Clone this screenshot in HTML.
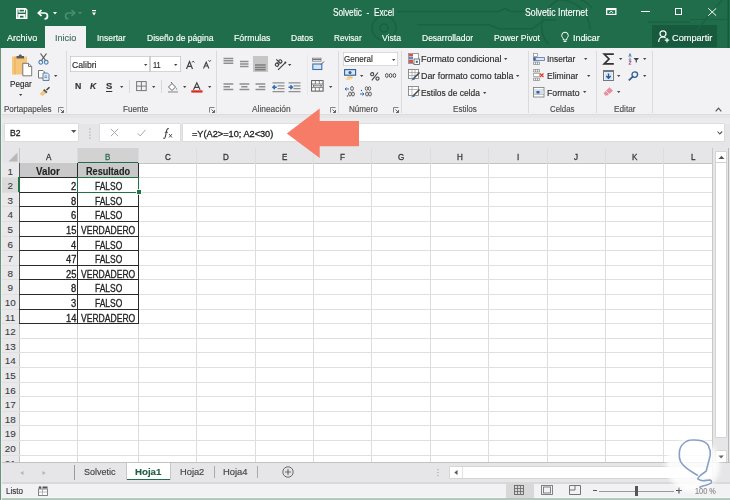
<!DOCTYPE html>
<html><head><meta charset="utf-8">
<style>
html,body{margin:0;padding:0;}
body{width:730px;height:500px;overflow:hidden;position:relative;background:#e6e5e7;font-family:"Liberation Sans",sans-serif;}
.a{position:absolute;}
.t{position:absolute;height:0;line-height:0;white-space:pre;transform-origin:0 0;-webkit-text-stroke:0.15px currentColor;}
.g{-webkit-text-stroke:0.3px currentColor;}
.gb{-webkit-text-stroke:0.1px currentColor;}
svg{position:absolute;overflow:visible;}
</style></head><body>
<!-- title + tabs -->
<div class="a" style="left:0;top:0;width:730px;height:47.5px;background:#1f6d4a"></div>
<div class="a" style="left:45.2px;top:26px;width:41.1px;height:21.5px;background:#f2f1f3"></div>
<div class="a" style="left:652.4px;top:25.2px;width:64.6px;height:22.3px;background:#185a3d"></div>
<!-- ribbon -->
<div class="a" style="left:0;top:47.5px;width:730px;height:67px;background:#f2f1f3"></div>
<div class="a" style="left:0;top:114.2px;width:730px;height:1px;background:#dcdcdc"></div>
<!-- band under ribbon / formula bar -->
<div class="a" style="left:0;top:115.2px;width:730px;height:34px;background:#e6e5e7"></div>
<div class="a" style="left:0;top:118px;width:730px;height:6px;background:#ebeaec"></div>
<div class="a" style="left:5px;top:124.4px;width:73px;height:16.8px;background:#fff;box-shadow:0 0 0 0.6px #d6d6d6"></div>
<div class="a" style="left:100.3px;top:124.4px;width:80.1px;height:16.8px;background:#fff;box-shadow:0 0 0 0.6px #d6d6d6"></div>
<div class="a" style="left:183px;top:124.4px;width:541px;height:16.8px;background:#fff;box-shadow:0 0 0 0.6px #d6d6d6"></div>
<div class="a" style="left:0;top:163px;width:713px;height:300px;background:#fff"></div>
<!-- column header row -->
<div class="a" style="left:1.5px;top:147.5px;width:711px;height:15.7px;background:#e6e5e7"></div>
<div class="a" style="left:77.7px;top:147.5px;width:60.8px;height:15.5px;background:#d2d2d2"></div>
<div class="a" style="left:1.5px;top:162.5px;width:711px;height:1px;background:#c4c4c4"></div>
<div class="a" style="left:77.7px;top:161.5px;width:60.8px;height:1.5px;background:#1f6d4a"></div>
<!-- row header column -->
<div class="a" style="left:1.5px;top:163px;width:18.1px;height:300px;background:#e9e8ea"></div>
<div class="a" style="left:1.5px;top:177.6px;width:18.1px;height:14.6px;background:#dadada"></div>
<div class="a" style="left:19.1px;top:147.5px;width:1px;height:315px;background:#c4c4c4"></div>
<div style="position:absolute;left:77.20px;top:147.5px;width:1px;height:315.4px;background:#dcdcdc"></div>
<div style="position:absolute;left:138.00px;top:147.5px;width:1px;height:315.4px;background:#dcdcdc"></div>
<div style="position:absolute;left:196.37px;top:147.5px;width:1px;height:315.4px;background:#dcdcdc"></div>
<div style="position:absolute;left:254.74px;top:147.5px;width:1px;height:315.4px;background:#dcdcdc"></div>
<div style="position:absolute;left:313.11px;top:147.5px;width:1px;height:315.4px;background:#dcdcdc"></div>
<div style="position:absolute;left:371.48px;top:147.5px;width:1px;height:315.4px;background:#dcdcdc"></div>
<div style="position:absolute;left:429.85px;top:147.5px;width:1px;height:315.4px;background:#dcdcdc"></div>
<div style="position:absolute;left:488.22px;top:147.5px;width:1px;height:315.4px;background:#dcdcdc"></div>
<div style="position:absolute;left:546.59px;top:147.5px;width:1px;height:315.4px;background:#dcdcdc"></div>
<div style="position:absolute;left:604.96px;top:147.5px;width:1px;height:315.4px;background:#dcdcdc"></div>
<div style="position:absolute;left:663.33px;top:147.5px;width:1px;height:315.4px;background:#dcdcdc"></div>
<div style="position:absolute;left:1.8px;top:177.10px;width:710.8px;height:1px;background:#dfdfdf"></div>
<div style="position:absolute;left:1.8px;top:191.70px;width:710.8px;height:1px;background:#dfdfdf"></div>
<div style="position:absolute;left:1.8px;top:206.30px;width:710.8px;height:1px;background:#dfdfdf"></div>
<div style="position:absolute;left:1.8px;top:220.90px;width:710.8px;height:1px;background:#dfdfdf"></div>
<div style="position:absolute;left:1.8px;top:235.50px;width:710.8px;height:1px;background:#dfdfdf"></div>
<div style="position:absolute;left:1.8px;top:250.10px;width:710.8px;height:1px;background:#dfdfdf"></div>
<div style="position:absolute;left:1.8px;top:264.70px;width:710.8px;height:1px;background:#dfdfdf"></div>
<div style="position:absolute;left:1.8px;top:279.30px;width:710.8px;height:1px;background:#dfdfdf"></div>
<div style="position:absolute;left:1.8px;top:293.90px;width:710.8px;height:1px;background:#dfdfdf"></div>
<div style="position:absolute;left:1.8px;top:308.50px;width:710.8px;height:1px;background:#dfdfdf"></div>
<div style="position:absolute;left:1.8px;top:323.10px;width:710.8px;height:1px;background:#dfdfdf"></div>
<div style="position:absolute;left:1.8px;top:337.70px;width:710.8px;height:1px;background:#dfdfdf"></div>
<div style="position:absolute;left:1.8px;top:352.30px;width:710.8px;height:1px;background:#dfdfdf"></div>
<div style="position:absolute;left:1.8px;top:366.90px;width:710.8px;height:1px;background:#dfdfdf"></div>
<div style="position:absolute;left:1.8px;top:381.50px;width:710.8px;height:1px;background:#dfdfdf"></div>
<div style="position:absolute;left:1.8px;top:396.10px;width:710.8px;height:1px;background:#dfdfdf"></div>
<div style="position:absolute;left:1.8px;top:410.70px;width:710.8px;height:1px;background:#dfdfdf"></div>
<div style="position:absolute;left:1.8px;top:425.30px;width:710.8px;height:1px;background:#dfdfdf"></div>
<div style="position:absolute;left:1.8px;top:439.90px;width:710.8px;height:1px;background:#dfdfdf"></div>
<div style="position:absolute;left:1.8px;top:454.50px;width:710.8px;height:1px;background:#dfdfdf"></div>
<div style="position:absolute;left:1.8px;top:469.10px;width:710.8px;height:1px;background:#dfdfdf"></div>
<!-- table -->
<div class="a" style="left:19.6px;top:163px;width:118.9px;height:14.6px;background:#c9c9c9"></div>
<div class="t g" style="left:45.96px;top:156.64px;font-size:9.4px;font-weight:400;color:#333;transform:scaleX(0.8600)">A</div>
<div class="t g" style="left:105.41px;top:156.64px;font-size:9.4px;font-weight:400;color:#2f6b50;transform:scaleX(0.8600)">B</div>
<div class="t g" style="left:164.77px;top:156.64px;font-size:9.4px;font-weight:400;color:#333;transform:scaleX(0.8600)">C</div>
<div class="t g" style="left:223.14px;top:156.64px;font-size:9.4px;font-weight:400;color:#333;transform:scaleX(0.8600)">D</div>
<div class="t g" style="left:281.73px;top:156.64px;font-size:9.4px;font-weight:400;color:#333;transform:scaleX(0.8600)">E</div>
<div class="t g" style="left:340.33px;top:156.64px;font-size:9.4px;font-weight:400;color:#333;transform:scaleX(0.8600)">F</div>
<div class="t g" style="left:398.03px;top:156.64px;font-size:9.4px;font-weight:400;color:#333;transform:scaleX(0.8600)">G</div>
<div class="t g" style="left:456.62px;top:156.64px;font-size:9.4px;font-weight:400;color:#333;transform:scaleX(0.8600)">H</div>
<div class="t g" style="left:516.78px;top:156.64px;font-size:9.4px;font-weight:400;color:#333;transform:scaleX(0.8600)">I</div>
<div class="t g" style="left:574.26px;top:156.64px;font-size:9.4px;font-weight:400;color:#333;transform:scaleX(0.8600)">J</div>
<div class="t g" style="left:631.95px;top:156.64px;font-size:9.4px;font-weight:400;color:#333;transform:scaleX(0.8600)">K</div>
<div class="t g" style="left:690.76px;top:156.64px;font-size:9.4px;font-weight:400;color:#333;transform:scaleX(0.8600)">L</div>
<div class="t gb" style="left:7.45px;top:171.67px;font-size:9.9px;font-weight:400;color:#3c3c3c;transform:scaleX(1.0000)">1</div>
<div class="t gb" style="left:7.45px;top:186.27px;font-size:9.9px;font-weight:400;color:#3c3c3c;transform:scaleX(1.0000)">2</div>
<div class="t gb" style="left:7.45px;top:200.87px;font-size:9.9px;font-weight:400;color:#3c3c3c;transform:scaleX(1.0000)">3</div>
<div class="t gb" style="left:7.45px;top:215.47px;font-size:9.9px;font-weight:400;color:#3c3c3c;transform:scaleX(1.0000)">4</div>
<div class="t gb" style="left:7.45px;top:230.07px;font-size:9.9px;font-weight:400;color:#3c3c3c;transform:scaleX(1.0000)">5</div>
<div class="t gb" style="left:7.45px;top:244.67px;font-size:9.9px;font-weight:400;color:#3c3c3c;transform:scaleX(1.0000)">6</div>
<div class="t gb" style="left:7.45px;top:259.27px;font-size:9.9px;font-weight:400;color:#3c3c3c;transform:scaleX(1.0000)">7</div>
<div class="t gb" style="left:7.45px;top:273.87px;font-size:9.9px;font-weight:400;color:#3c3c3c;transform:scaleX(1.0000)">8</div>
<div class="t gb" style="left:7.45px;top:288.47px;font-size:9.9px;font-weight:400;color:#3c3c3c;transform:scaleX(1.0000)">9</div>
<div class="t gb" style="left:4.71px;top:303.07px;font-size:9.9px;font-weight:400;color:#3c3c3c;transform:scaleX(1.0000)">10</div>
<div class="t gb" style="left:5.07px;top:317.67px;font-size:9.9px;font-weight:400;color:#3c3c3c;transform:scaleX(1.0000)">11</div>
<div class="t gb" style="left:4.71px;top:332.27px;font-size:9.9px;font-weight:400;color:#3c3c3c;transform:scaleX(1.0000)">12</div>
<div class="t gb" style="left:4.71px;top:346.87px;font-size:9.9px;font-weight:400;color:#3c3c3c;transform:scaleX(1.0000)">13</div>
<div class="t gb" style="left:4.71px;top:361.47px;font-size:9.9px;font-weight:400;color:#3c3c3c;transform:scaleX(1.0000)">14</div>
<div class="t gb" style="left:4.71px;top:376.07px;font-size:9.9px;font-weight:400;color:#3c3c3c;transform:scaleX(1.0000)">15</div>
<div class="t gb" style="left:4.71px;top:390.67px;font-size:9.9px;font-weight:400;color:#3c3c3c;transform:scaleX(1.0000)">16</div>
<div class="t gb" style="left:4.71px;top:405.27px;font-size:9.9px;font-weight:400;color:#3c3c3c;transform:scaleX(1.0000)">17</div>
<div class="t gb" style="left:4.71px;top:419.87px;font-size:9.9px;font-weight:400;color:#3c3c3c;transform:scaleX(1.0000)">18</div>
<div class="t gb" style="left:4.71px;top:434.47px;font-size:9.9px;font-weight:400;color:#3c3c3c;transform:scaleX(1.0000)">19</div>
<div class="t gb" style="left:4.71px;top:449.07px;font-size:9.9px;font-weight:400;color:#3c3c3c;transform:scaleX(1.0000)">20</div>
<div class="t gb" style="left:4.71px;top:463.67px;font-size:9.9px;font-weight:400;color:#3c3c3c;transform:scaleX(1.0000)">21</div>
<div class="t g" style="left:71.07px;top:187.13px;font-size:10px;font-weight:400;color:#222;transform:scaleX(0.9400)">2</div>
<div class="t g" style="left:94.65px;top:187.13px;font-size:10px;font-weight:400;color:#222;transform:scaleX(0.8465)">FALSO</div>
<div class="t g" style="left:71.07px;top:201.73px;font-size:10px;font-weight:400;color:#222;transform:scaleX(0.9400)">8</div>
<div class="t g" style="left:94.65px;top:201.73px;font-size:10px;font-weight:400;color:#222;transform:scaleX(0.8465)">FALSO</div>
<div class="t g" style="left:71.07px;top:216.34px;font-size:10px;font-weight:400;color:#222;transform:scaleX(0.9400)">6</div>
<div class="t g" style="left:94.65px;top:216.34px;font-size:10px;font-weight:400;color:#222;transform:scaleX(0.8465)">FALSO</div>
<div class="t g" style="left:65.84px;top:230.94px;font-size:10px;font-weight:400;color:#222;transform:scaleX(0.9400)">15</div>
<div class="t g" style="left:81.15px;top:230.94px;font-size:10px;font-weight:400;color:#222;transform:scaleX(0.8570)">VERDADERO</div>
<div class="t g" style="left:71.07px;top:245.53px;font-size:10px;font-weight:400;color:#222;transform:scaleX(0.9400)">4</div>
<div class="t g" style="left:94.65px;top:245.53px;font-size:10px;font-weight:400;color:#222;transform:scaleX(0.8465)">FALSO</div>
<div class="t g" style="left:65.84px;top:260.14px;font-size:10px;font-weight:400;color:#222;transform:scaleX(0.9400)">47</div>
<div class="t g" style="left:94.65px;top:260.14px;font-size:10px;font-weight:400;color:#222;transform:scaleX(0.8465)">FALSO</div>
<div class="t g" style="left:65.84px;top:274.74px;font-size:10px;font-weight:400;color:#222;transform:scaleX(0.9400)">25</div>
<div class="t g" style="left:81.15px;top:274.74px;font-size:10px;font-weight:400;color:#222;transform:scaleX(0.8570)">VERDADERO</div>
<div class="t g" style="left:71.07px;top:289.34px;font-size:10px;font-weight:400;color:#222;transform:scaleX(0.9400)">8</div>
<div class="t g" style="left:94.65px;top:289.34px;font-size:10px;font-weight:400;color:#222;transform:scaleX(0.8465)">FALSO</div>
<div class="t g" style="left:71.07px;top:303.94px;font-size:10px;font-weight:400;color:#222;transform:scaleX(0.9400)">3</div>
<div class="t g" style="left:94.65px;top:303.94px;font-size:10px;font-weight:400;color:#222;transform:scaleX(0.8465)">FALSO</div>
<div class="t g" style="left:65.84px;top:318.54px;font-size:10px;font-weight:400;color:#222;transform:scaleX(0.9400)">14</div>
<div class="t g" style="left:81.15px;top:318.54px;font-size:10px;font-weight:400;color:#222;transform:scaleX(0.8570)">VERDADERO</div>
<div class="t gb" style="left:36.45px;top:172.13px;font-size:10px;font-weight:700;color:#222;transform:scaleX(0.9768)">Valor</div>
<div class="t gb" style="left:85.80px;top:172.13px;font-size:10px;font-weight:700;color:#222;transform:scaleX(0.9101)">Resultado</div>
<!-- scrollbar v -->
<div class="a" style="left:712.4px;top:147.5px;width:17.6px;height:315.4px;background:#e6e5e7"></div>
<div class="a" style="left:712.4px;top:147.5px;width:1px;height:315.4px;background:#c8c8c8"></div>
<div class="a" style="left:716px;top:151.6px;width:10px;height:285px;background:#fff;box-shadow:0 0 0 0.6px #c8c8c8"></div>
<div class="a" style="left:716px;top:162.3px;width:10px;height:0.8px;background:#d0d0d0"></div>
<div class="a" style="left:727.5px;top:147.5px;width:1.2px;height:315.4px;background:#b8b8b8"></div>
<!-- sheet tab bar -->
<div class="a" style="left:0;top:462.9px;width:730px;height:19px;background:#e6e5e7"></div>
<div class="a" style="left:0;top:462.2px;width:730px;height:1.3px;background:#c2c2c2"></div>
<div class="a" style="left:126px;top:462.9px;width:45px;height:17px;background:#fff"></div>
<div class="a" style="left:126px;top:478.8px;width:45px;height:1.6px;background:#1f6d4a"></div>
<div class="a" style="left:462px;top:466.5px;width:250px;height:11.5px;background:#fff;box-shadow:0 0 0 0.6px #c8c8c8"></div>
<!-- status bar -->
<div class="a" style="left:0;top:481.9px;width:730px;height:18.1px;background:#f2f1f3"></div>
<div class="a" style="left:0;top:482.3px;width:730px;height:1.5px;background:#d9d9d9"></div>
<div class="a" style="left:0;top:497px;width:730px;height:1.4px;background:#f4faf6"></div>
<div class="a" style="left:0;top:498.4px;width:730px;height:1.6px;background:#b3c7bb"></div>
<div class="a" style="left:505.5px;top:483.5px;width:28px;height:14px;background:#d8d8d8"></div>
<!-- window borders -->
<div class="a" style="left:0;top:47.5px;width:1px;height:452.5px;background:#6f8f7f"></div>
<div class="a" style="left:1px;top:47.5px;width:0.8px;height:452.5px;background:#e8f2ee"></div>
<!-- title bar circuit pattern -->
<svg style="left:0;top:0" width="730" height="47" viewBox="0 0 730 47">
 <g fill="none" stroke="#1a6243" stroke-width="1.6">
  <path d="M397 11.5 H499 L505 8.5 L511 11.5 H540"/>
  <path d="M417 24.7 H489 L499 28.8 H532 L545 20 H556"/>
  <path d="M697 30 L722 0"/>
  <path d="M648 22 H690"/>
  <path d="M548 44 A24 24 0 0 1 592 8"/>
  <path d="M560 0 A30 30 0 0 1 590 30"/>
 </g>
 <circle cx="384" cy="28" r="12" fill="none" stroke="#1a6243" stroke-width="1.6"/>
 <circle cx="384" cy="28" r="4" fill="none" stroke="#1a6243" stroke-width="1.6"/>
 <rect x="727.5" y="0" width="1.5" height="47.5" fill="#185a3d"/>
 <path d="M690 19.5 H727" stroke="#1a6243" stroke-width="1.2"/>
</svg>
<!-- quick access -->
<svg style="left:16px;top:7.5px" width="12" height="11" viewBox="0 0 12 11">
 <path d="M0.8 0.8 H9.5 L10.7 2 V10.2 H0.8 Z" fill="none" stroke="#fff" stroke-width="1.6"/>
 <rect x="3" y="1" width="5.5" height="3" fill="none" stroke="#fff" stroke-width="1.2"/>
 <rect x="2.2" y="6" width="7.3" height="4.5" fill="#fff"/>
 <rect x="4" y="7.8" width="3.5" height="1.8" fill="#1f6d4a"/>
</svg>
<svg style="left:37px;top:8.5px" width="12" height="10" viewBox="0 0 12 10">
 <path d="M1.5 4 H7.5 A3 3 0 0 1 7.5 10" fill="none" stroke="#fff" stroke-width="1.7"/>
 <path d="M4.5 1 L1.3 4 L4.5 7" fill="none" stroke="#fff" stroke-width="1.7"/>
</svg>
<svg style="left:52.5px;top:11.8px" width="4" height="3" viewBox="0 0 4 3"><path d="M0 0H4L2 2.5Z" fill="#fff"/></svg>
<svg style="left:63.5px;top:8.5px" width="12" height="10" viewBox="0 0 12 10" opacity="0.35">
 <path d="M10.5 4 H4.5 A3 3 0 0 0 4.5 10" fill="none" stroke="#9fc9b0" stroke-width="1.7"/>
 <path d="M7.5 1 L10.7 4 L7.5 7" fill="none" stroke="#9fc9b0" stroke-width="1.7"/>
</svg>
<svg style="left:78.4px;top:11.8px" width="4" height="3" viewBox="0 0 4 3" opacity="0.35"><path d="M0 0H4L2 2.5Z" fill="#9fc9b0"/></svg>
<svg style="left:92px;top:10px" width="4" height="6" viewBox="0 0 4 6"><rect x="0" y="0" width="4" height="1.2" fill="#fff"/><path d="M0 2.5H4L2 5.5Z" fill="#fff"/></svg>
<!-- window controls -->
<svg style="left:605.5px;top:8.2px" width="11" height="7" viewBox="0 0 11 7">
 <rect x="0" y="0" width="10.5" height="7" fill="#fff"/>
 <rect x="1.3" y="2.2" width="7.9" height="3.6" fill="#1f6d4a"/>
 <path d="M3.3 5 L5.25 3 L7.2 5" fill="none" stroke="#fff" stroke-width="1"/>
</svg>
<div class="a" style="left:640.5px;top:11.3px;width:9px;height:1px;background:#fff"></div>
<div class="a" style="left:675.4px;top:8.2px;width:7px;height:7px;box-sizing:border-box;border:1px solid #fff"></div>
<svg style="left:708px;top:8px" width="8.5" height="8" viewBox="0 0 8.5 8"><path d="M0.3 0.3 L8.2 7.7 M8.2 0.3 L0.3 7.7" stroke="#fff" stroke-width="1"/></svg>
<!-- tell me bulb -->
<svg style="left:560.5px;top:32px" width="8" height="11" viewBox="0 0 8 11">
 <path d="M2.5 8 C2.5 6 0.7 5.2 0.7 3.5 A3.3 3.3 0 0 1 7.3 3.5 C7.3 5.2 5.5 6 5.5 8 Z" fill="none" stroke="#fff" stroke-width="1"/>
 <path d="M2.6 9.5 H5.4" stroke="#fff" stroke-width="1"/>
</svg>
<!-- share person -->
<svg style="left:658px;top:30px" width="12" height="13" viewBox="0 0 12 13">
 <circle cx="5" cy="3.8" r="3" fill="none" stroke="#fff" stroke-width="1.2"/>
 <path d="M0.7 12 C0.7 8.8 2.5 7 5 7 C6.2 7 7 7.4 7.6 8" fill="none" stroke="#fff" stroke-width="1.2"/>
 <path d="M9 8 V12.5 M6.8 10.2 H11.2" stroke="#fff" stroke-width="1.2"/>
</svg>

<!-- ribbon group separators -->
<div class="a" style="left:65.5px;top:51px;width:1px;height:62px;background:#dadada"></div>
<div class="a" style="left:216px;top:51px;width:1px;height:62px;background:#dadada"></div>
<div class="a" style="left:338px;top:51px;width:1px;height:62px;background:#dadada"></div>
<div class="a" style="left:401.3px;top:51px;width:1px;height:62px;background:#dadada"></div>
<div class="a" style="left:527.7px;top:51px;width:1px;height:62px;background:#dadada"></div>
<div class="a" style="left:595.5px;top:51px;width:1px;height:62px;background:#dadada"></div>
<div class="a" style="left:652px;top:51px;width:1px;height:62px;background:#dadada"></div>
<!-- inner separators -->
<div class="a" style="left:128.8px;top:80px;width:1px;height:13px;background:#d8d8d8"></div>
<div class="a" style="left:161.2px;top:80px;width:1px;height:13px;background:#d8d8d8"></div>
<div class="a" style="left:306.5px;top:55px;width:1px;height:40px;background:#e8e8e8"></div>

<!-- Portapapeles -->
<svg style="left:12px;top:53.5px" width="22" height="23" viewBox="0 0 22 23">
 <rect x="0" y="2.5" width="15" height="18" fill="#f5c67a"/>
 <rect x="2" y="2.5" width="2" height="18" fill="#eab25a" opacity="0.6"/>
 <path d="M4.5 4.5 V2 H6.5 L7.5 0.5 H9 L10 2 H12 V4.5 Z" fill="#5a5a5a"/>
 <path d="M10.8 9.3 H16.5 L19.7 12.5 V21.8 H10.8 Z" fill="#fff" stroke="#6b6b6b" stroke-width="0.9"/>
 <path d="M16.5 9.3 V12.5 H19.7" fill="none" stroke="#6b6b6b" stroke-width="0.9"/>
</svg>
<svg style="left:18.5px;top:93.8px" width="4" height="3" viewBox="0 0 4 3"><path d="M0 0H3.4L1.7 2Z" fill="#444"/></svg>
<svg style="left:38px;top:52.5px" width="11" height="12" viewBox="0 0 11 12">
 <path d="M2.5 0.5 L8 8 M8.5 0.5 L3 8" stroke="#555" stroke-width="1.2"/>
 <circle cx="2.8" cy="9.3" r="1.9" fill="none" stroke="#4a7fb5" stroke-width="1.1"/>
 <circle cx="8.2" cy="9.3" r="1.9" fill="none" stroke="#4a7fb5" stroke-width="1.1"/>
</svg>
<svg style="left:38px;top:69.5px" width="12" height="11" viewBox="0 0 12 11">
 <path d="M0.5 0.5 H5 L6.5 2 V8 H0.5 Z" fill="#fff" stroke="#666" stroke-width="0.9"/>
 <path d="M5 3 H9.5 L11 4.5 V10.5 H5 Z" fill="#dfe9f5" stroke="#4d78a8" stroke-width="0.9"/>
 <path d="M6.5 6 H9 M6.5 7.5 H9" stroke="#4d78a8" stroke-width="0.7"/>
</svg>
<svg style="left:53.5px;top:74.5px" width="4" height="3" viewBox="0 0 4 3"><path d="M0 0H3.4L1.7 2Z" fill="#444"/></svg>
<svg style="left:39px;top:86.5px" width="11" height="9" viewBox="0 0 11 9">
 <path d="M0.5 7 L4.5 3 L7.5 6 L3.5 9 Z" fill="#f0c77f"/>
 <path d="M4 3.2 L7.3 6.2 L8.5 5 L5.3 2 Z" fill="#555"/>
 <path d="M7.5 3 L10.5 0.2" stroke="#444" stroke-width="1.5"/>
</svg>
<!-- launchers -->
<svg style="left:57.5px;top:107px" width="6" height="6" viewBox="0 0 6 6"><path d="M0.5 5.5 V0.5 H5.5" fill="none" stroke="#777" stroke-width="0.9"/><path d="M2.5 2.5 L5.5 5.5 M3 5.5 H5.5 V3" fill="none" stroke="#555" stroke-width="0.9"/></svg>
<svg style="left:208.6px;top:107px" width="6" height="6" viewBox="0 0 6 6"><path d="M0.5 5.5 V0.5 H5.5" fill="none" stroke="#777" stroke-width="0.9"/><path d="M2.5 2.5 L5.5 5.5 M3 5.5 H5.5 V3" fill="none" stroke="#555" stroke-width="0.9"/></svg>
<svg style="left:329.8px;top:107px" width="6" height="6" viewBox="0 0 6 6"><path d="M0.5 5.5 V0.5 H5.5" fill="none" stroke="#777" stroke-width="0.9"/><path d="M2.5 2.5 L5.5 5.5 M3 5.5 H5.5 V3" fill="none" stroke="#555" stroke-width="0.9"/></svg>
<svg style="left:393.2px;top:107px" width="6" height="6" viewBox="0 0 6 6"><path d="M0.5 5.5 V0.5 H5.5" fill="none" stroke="#777" stroke-width="0.9"/><path d="M2.5 2.5 L5.5 5.5 M3 5.5 H5.5 V3" fill="none" stroke="#555" stroke-width="0.9"/></svg>
<!-- collapse caret -->
<svg style="left:715px;top:106.5px" width="7" height="5" viewBox="0 0 7 5"><path d="M0.7 4.3 L3.5 1.2 L6.3 4.3" fill="none" stroke="#555" stroke-width="1.2"/></svg>

<!-- Fuente -->
<div class="a" style="left:69.6px;top:56.2px;width:80.7px;height:16px;background:#fff;box-shadow:inset 0 0 0 0.8px #c6c6c6"></div>
<div class="a" style="left:150.3px;top:56.2px;width:30.9px;height:16px;background:#fff;box-shadow:inset 0 0 0 0.8px #c6c6c6"></div>
<svg style="left:143.6px;top:63.6px" width="4" height="3" viewBox="0 0 4 3"><path d="M0 0H3.4L1.7 2Z" fill="#444"/></svg>
<svg style="left:174.4px;top:63.6px" width="4" height="3" viewBox="0 0 4 3"><path d="M0 0H3.4L1.7 2Z" fill="#444"/></svg>
<svg style="left:186px;top:59.5px" width="9" height="10" viewBox="0 0 9 10">
 <path d="M0.5 9 L3.5 1.5 L6.5 9 M1.7 6.3 H5.3" fill="none" stroke="#444" stroke-width="1.2"/>
 <path d="M6 2.5 L7.2 1 L8.4 2.5" fill="none" stroke="#444" stroke-width="0.9"/>
</svg>
<svg style="left:202.5px;top:59px" width="9" height="10" viewBox="0 0 9 10">
 <path d="M0.5 9.5 L3.2 3.2 L5.9 9.5 M1.6 7 H4.8" fill="none" stroke="#444" stroke-width="1.1"/>
 <path d="M5.5 1.2 L6.7 2.6 L7.9 1.2" fill="none" stroke="#444" stroke-width="0.9"/>
</svg>

<svg style="left:120px;top:86.4px" width="4" height="3" viewBox="0 0 4 3"><path d="M0 0H3.4L1.7 2Z" fill="#444"/></svg>
<svg style="left:135.5px;top:81.4px" width="11" height="10" viewBox="0 0 11 10">
 <rect x="0.6" y="0.6" width="9.6" height="9" fill="none" stroke="#777" stroke-width="1"/>
 <path d="M5.4 0.6 V9.6 M0.6 5.1 H10.2" stroke="#777" stroke-width="1"/>
</svg>
<svg style="left:151.6px;top:86.4px" width="4" height="3" viewBox="0 0 4 3"><path d="M0 0H3.4L1.7 2Z" fill="#444"/></svg>
<svg style="left:167px;top:80.8px" width="12" height="12" viewBox="0 0 12 12">
 <path d="M1.5 6 L5 2.5 L8.5 6 L5 9.5 Z" fill="#fff" stroke="#666" stroke-width="1"/>
 <path d="M4 1 L5 2.5" stroke="#666" stroke-width="1"/>
 <path d="M9.5 6.5 Q10.8 8 9.8 9 Q8.8 8 9.5 6.5Z" fill="#3a8a9a"/>
 <rect x="1" y="10.2" width="10" height="1.5" fill="#a8a8a8"/>
</svg>
<svg style="left:183px;top:86.4px" width="4" height="3" viewBox="0 0 4 3"><path d="M0 0H3.4L1.7 2Z" fill="#444"/></svg>
<svg style="left:191px;top:81.5px" width="12" height="11" viewBox="0 0 12 11">
 <path d="M2.5 7.8 L5.8 0.8 L9.1 7.8 M3.8 5.3 H7.8" fill="none" stroke="#444" stroke-width="1.2"/>
 <rect x="0.3" y="8.3" width="11.2" height="2.3" fill="#e02b20"/>
</svg>
<svg style="left:207.7px;top:86.4px" width="4" height="3" viewBox="0 0 4 3"><path d="M0 0H3.4L1.7 2Z" fill="#444"/></svg>

<!-- Alineación -->
<div class="a" style="left:252.8px;top:55.8px;width:15.3px;height:16.4px;background:#c6c6c6"></div>
<svg style="left:223px;top:57px" width="48" height="14" viewBox="0 0 48 14">
 <g stroke="#8f8f8f" stroke-width="1.5">
 <path d="M0.5 1.4 H10.3 M0.5 3.8 H10.3 M0.5 6.2 H10.3"/>
 <path d="M17 4.6 H25.5 M17 7 H25.5 M17 9.4 H25.5"/>
 </g>
 <g stroke="#7d7d7d" stroke-width="1.5">
 <path d="M32 8 H42.7 M32 10.4 H42.7 M32 12.8 H42.7"/>
 </g>
</svg>
<svg style="left:272.5px;top:58px" width="14" height="12" viewBox="0 0 14 12">
 <g transform="translate(5.2,4.6) rotate(-45)" fill="none" stroke="#3c3c3c" stroke-width="1.1">
  <ellipse cx="-2.4" cy="0.6" rx="1.5" ry="1.7"/><path d="M-0.9 -1.2 V2.4"/>
  <ellipse cx="2.4" cy="0.6" rx="1.5" ry="1.7"/><path d="M0.9 -3.6 V2.4"/>
 </g>
 <path d="M5 11.8 L12.2 4.8" stroke="#3c3c3c" stroke-width="1.1"/>
 <circle cx="12.4" cy="4.6" r="1" fill="#3c3c3c"/>
</svg>
<svg style="left:288.4px;top:63.8px" width="4" height="3" viewBox="0 0 4 3"><path d="M0 0H3.4L1.7 2Z" fill="#444"/></svg>
<svg style="left:223px;top:82.5px" width="44" height="9" viewBox="0 0 44 9">
 <g stroke="#8f8f8f" stroke-width="1.5">
 <path d="M0.5 1 H10.3 M0.5 3.8 H7 M0.5 6.6 H10.3"/>
 <path d="M16.5 1 H26.3 M18.3 3.8 H24.5 M16.5 6.6 H26.3"/>
 <path d="M32.5 1 H42.3 M35.8 3.8 H42.3 M32.5 6.6 H42.3"/>
 </g>
</svg>
<svg style="left:272.2px;top:81.5px" width="30" height="11" viewBox="0 0 30 11">
 <g stroke="#8f8f8f" stroke-width="1.2">
 <path d="M0.5 0.8 H12.5 M5.5 3.8 H12.5 M5.5 6.6 H12.5 M0.5 9.6 H12.5"/>
 <path d="M16.5 0.8 H28.5 M21.5 3.8 H28.5 M21.5 6.6 H28.5 M16.5 9.6 H28.5"/>
 </g>
 <path d="M1 5.2 H4.8 M2.9 3.2 L0.9 5.2 L2.9 7.2" fill="none" stroke="#2f6fb3" stroke-width="1.5"/>
 <path d="M16.5 5.2 H20.3 M18.4 3.2 L20.4 5.2 L18.4 7.2" fill="none" stroke="#2f6fb3" stroke-width="1.5"/>
</svg>
<svg style="left:311.5px;top:57.5px" width="13" height="13" viewBox="0 0 13 13">
 <path d="M0.5 1.5 H9" stroke="#777" stroke-width="1"/>
 <rect x="0.5" y="0.2" width="8.5" height="3" fill="none" stroke="#888" stroke-width="0.9"/>
 <rect x="0.8" y="6" width="9" height="5.5" fill="#d6e4f3" stroke="#3b73b0" stroke-width="1.1"/>
 <path d="M9 6.5 L12 3.5" stroke="#555" stroke-width="1"/>
</svg>
<svg style="left:310.9px;top:80.4px" width="13" height="12" viewBox="0 0 13 12">
 <rect x="0.6" y="0.6" width="11.5" height="10.5" fill="#fff" stroke="#555" stroke-width="1"/>
 <path d="M0.6 4 H12.1 M0.6 7.6 H12.1 M4.4 0.6 V4 M8.3 0.6 V4 M4.4 7.6 V11.1 M8.3 7.6 V11.1" stroke="#666" stroke-width="0.8"/>
 <path d="M2 5.8 H10.7 M3.3 4.7 L2 5.8 L3.3 6.9 M9.4 4.7 L10.7 5.8 L9.4 6.9" fill="none" stroke="#555" stroke-width="0.8"/>
</svg>
<svg style="left:329px;top:86.4px" width="4" height="3" viewBox="0 0 4 3"><path d="M0 0H3.4L1.7 2Z" fill="#444"/></svg>

<!-- Número -->
<div class="a" style="left:342.6px;top:52px;width:55.8px;height:14px;background:#fff;box-shadow:inset 0 0 0 0.8px #d0d0d0"></div>
<svg style="left:391.6px;top:59.3px" width="4" height="3" viewBox="0 0 4 3"><path d="M0 0H3.4L1.7 2Z" fill="#444"/></svg>
<svg style="left:344.2px;top:69px" width="13" height="11" viewBox="0 0 13 11">
 <rect x="0.6" y="0.6" width="11" height="5.6" fill="#dbe7f4" stroke="#2d5f99" stroke-width="1.1"/>
 <circle cx="6" cy="3.4" r="1.5" fill="#2d5f99"/>
 <ellipse cx="6" cy="8.5" rx="3" ry="1.3" fill="#f3c67b"/>
 <ellipse cx="4" cy="10" rx="2.5" ry="1" fill="#f6d49a"/>
</svg>
<svg style="left:360.2px;top:74.8px" width="4" height="3" viewBox="0 0 4 3"><path d="M0 0H3.4L1.7 2Z" fill="#444"/></svg>
<svg style="left:370px;top:71.5px" width="10" height="9" viewBox="0 0 10 9">
 <circle cx="2.2" cy="2.2" r="1.6" fill="none" stroke="#444" stroke-width="1.1"/>
 <circle cx="7.5" cy="6.6" r="1.6" fill="none" stroke="#444" stroke-width="1.1"/>
 <path d="M8 0.5 L1.8 8.3" stroke="#444" stroke-width="1.1"/>
</svg>
<svg style="left:384.8px;top:72.8px" width="12" height="5" viewBox="0 0 12 5">
 <g fill="none" stroke="#444" stroke-width="0.9"><ellipse cx="1.8" cy="2.5" rx="1.3" ry="2"/><ellipse cx="5.6" cy="2.5" rx="1.3" ry="2"/><ellipse cx="9.4" cy="2.5" rx="1.3" ry="2"/></g>
</svg>
<svg style="left:344.2px;top:86.4px" width="28" height="11" viewBox="0 0 28 11">
 <g fill="none" stroke="#555" stroke-width="0.9">
  <ellipse cx="8" cy="2.5" rx="1.4" ry="2"/><ellipse cx="6" cy="8" rx="1.4" ry="2"/><ellipse cx="9" cy="8" rx="1.4" ry="2"/>
  <ellipse cx="22.5" cy="2.5" rx="1.2" ry="1.8"/><ellipse cx="25.5" cy="2.5" rx="1.2" ry="1.8"/><ellipse cx="23" cy="8" rx="1.4" ry="2"/><ellipse cx="26" cy="8" rx="1.4" ry="2"/>
 </g>
 <path d="M1 3 H5 M2.5 1.5 L1 3 L2.5 4.5" fill="none" stroke="#2f6fb3" stroke-width="1"/>
 <path d="M16 8 H20 M18.5 6.5 L20 8 L18.5 9.5" fill="none" stroke="#2f6fb3" stroke-width="1"/>
 <circle cx="3.5" cy="10" r="0.7" fill="#555"/><circle cx="17.5" cy="4.5" r="0.7" fill="#555"/>
</svg>

<!-- Estilos icons -->
<svg style="left:407.7px;top:52.5px" width="12" height="12" viewBox="0 0 12 12">
 <rect x="0.5" y="0.5" width="10" height="10" fill="#fff" stroke="#888" stroke-width="0.8"/>
 <rect x="1" y="1" width="4" height="2.5" fill="#d9544a"/><rect x="1" y="4" width="4" height="2.5" fill="#5a8ac6"/><rect x="1" y="7" width="4" height="3" fill="#d9544a"/>
 <rect x="6" y="6" width="5.5" height="5.5" fill="#fff" stroke="#555" stroke-width="0.8"/>
 <rect x="7.8" y="7.8" width="2" height="2" fill="#2f5f9f"/>
</svg>
<svg style="left:407.7px;top:69px" width="12" height="12" viewBox="0 0 12 12">
 <rect x="0.5" y="0.5" width="10" height="9" fill="#fff" stroke="#777" stroke-width="0.8"/>
 <path d="M0.5 3.5 H10.5 M0.5 6.5 H10.5 M4 0.5 V9.5 M7 0.5 V9.5" stroke="#999" stroke-width="0.7"/>
 <path d="M5 10 L11.5 3.5" stroke="#444" stroke-width="1.5"/>
 <path d="M3 11.5 L5.5 9 L7 10.5 Z" fill="#2f73c0"/>
</svg>
<svg style="left:407.7px;top:85.8px" width="12" height="12" viewBox="0 0 12 12">
 <rect x="0.5" y="0.5" width="10" height="9" fill="#fff" stroke="#777" stroke-width="0.8"/>
 <path d="M0.5 3.5 H10.5 M4 0.5 V9.5" stroke="#999" stroke-width="0.7"/>
 <path d="M5 10 L11.5 3.5" stroke="#444" stroke-width="1.5"/>
 <path d="M3 11.5 L5.5 9 L7 10.5 Z" fill="#2f73c0"/>
</svg>
<svg style="left:504px;top:58px" width="4" height="3" viewBox="0 0 4 3"><path d="M0 0H3.4L1.7 2Z" fill="#444"/></svg>
<svg style="left:516px;top:74.6px" width="4" height="3" viewBox="0 0 4 3"><path d="M0 0H3.4L1.7 2Z" fill="#444"/></svg>
<svg style="left:482.5px;top:91.6px" width="4" height="3" viewBox="0 0 4 3"><path d="M0 0H3.4L1.7 2Z" fill="#444"/></svg>

<!-- Celdas icons -->
<svg style="left:533px;top:52.5px" width="12" height="12" viewBox="0 0 12 12">
 <rect x="0.5" y="0.5" width="4" height="3" fill="#fff" stroke="#888" stroke-width="0.7"/>
 <path d="M0.5 4.5 H11.5 V7.5 H0.5 Z" fill="#dce7f3" stroke="#4d78a8" stroke-width="0.8"/>
 <path d="M0.8 4 L3.5 6 L0.8 8 Z" fill="#2f5f9f"/>
 <path d="M0.5 9 H6.5 V11.5 H0.5 Z M2.5 9 V11.5 M4.5 9 V11.5" fill="none" stroke="#888" stroke-width="0.7"/>
</svg>
<svg style="left:533px;top:68.5px" width="12" height="12" viewBox="0 0 12 12">
 <path d="M0.5 0.5 H6.5 V3 H0.5 Z M2.5 0.5 V3 M4.5 0.5 V3" fill="none" stroke="#888" stroke-width="0.7"/>
 <rect x="0.5" y="4.5" width="6" height="3" fill="#fff" stroke="#999" stroke-width="0.7"/>
 <path d="M7 4.5 L10.5 8 M10.5 4.5 L7 8" stroke="#d83b2b" stroke-width="1.1"/>
 <path d="M0.5 9 H6.5 V11.5 H0.5 Z M2.5 9 V11.5 M4.5 9 V11.5" fill="none" stroke="#888" stroke-width="0.7"/>
</svg>
<svg style="left:533px;top:85.5px" width="12" height="12" viewBox="0 0 12 12">
 <rect x="0.5" y="1.5" width="10.5" height="9.5" fill="#fff" stroke="#777" stroke-width="0.8"/>
 <path d="M0.5 4 H11 M0.5 8.5 H11" stroke="#999" stroke-width="0.6"/>
 <rect x="1" y="4.5" width="9.5" height="3.5" fill="#cfdff0"/>
 <rect x="3.5" y="5" width="3" height="2.5" fill="#2f5f9f"/>
</svg>
<svg style="left:583.5px;top:58px" width="4" height="3" viewBox="0 0 4 3"><path d="M0 0H3.4L1.7 2Z" fill="#444"/></svg>
<svg style="left:587px;top:74.6px" width="4" height="3" viewBox="0 0 4 3"><path d="M0 0H3.4L1.7 2Z" fill="#444"/></svg>
<svg style="left:583px;top:91.2px" width="4" height="3" viewBox="0 0 4 3"><path d="M0 0H3.4L1.7 2Z" fill="#444"/></svg>

<!-- Editar icons -->
<svg style="left:602.5px;top:52.5px" width="12" height="12" viewBox="0 0 12 12">
 <path d="M10.8 1.2 H1.2 L6 6 L1.2 10.8 H10.8" fill="none" stroke="#333" stroke-width="1.7"/>
</svg>
<svg style="left:618.5px;top:57.8px" width="4" height="3" viewBox="0 0 4 3"><path d="M0 0H3.4L1.7 2Z" fill="#444"/></svg>
<svg style="left:628px;top:52.5px" width="12" height="12" viewBox="0 0 12 12">
 <path d="M0.8 3.8 L2 0.5 L3.2 3.8 M1.2 2.8 H2.8" fill="none" stroke="#3b74b8" stroke-width="0.8"/>
 <path d="M2 4.5 V7.5 M1 6.5 L2 7.5 L3 6.5" fill="none" stroke="#555" stroke-width="0.7"/>
 <path d="M0.8 8.3 H3.2 L0.8 11.2 H3.2" fill="none" stroke="#8a3f9a" stroke-width="0.8"/>
 <path d="M5.5 5 H11 L8.8 7.5 V9.5 H7.7 V7.5 Z" fill="#444"/>
</svg>
<svg style="left:642.5px;top:57.8px" width="4" height="3" viewBox="0 0 4 3"><path d="M0 0H3.4L1.7 2Z" fill="#444"/></svg>
<svg style="left:603px;top:69.5px" width="11" height="11" viewBox="0 0 11 11">
 <rect x="0.5" y="0.5" width="10" height="10" fill="#fff" stroke="#777" stroke-width="1"/>
 <rect x="0.5" y="0.5" width="10" height="1.6" fill="#777"/>
 <rect x="1.5" y="2.6" width="8" height="7.2" fill="#d6e5f4"/>
 <path d="M5.5 3.5 V8.2 M3.3 6 L5.5 8.3 L7.7 6" fill="none" stroke="#1f5c9e" stroke-width="1.3"/>
</svg>
<svg style="left:617px;top:74.6px" width="4" height="3" viewBox="0 0 4 3"><path d="M0 0H3.4L1.7 2Z" fill="#444"/></svg>
<svg style="left:628px;top:70.5px" width="11" height="10" viewBox="0 0 11 10">
 <circle cx="6.8" cy="3.6" r="2.8" fill="none" stroke="#2c5d91" stroke-width="1.3"/>
 <path d="M4.8 5.6 L0.8 9.4" stroke="#2c5d91" stroke-width="1.6"/>
</svg>
<svg style="left:642.5px;top:74.6px" width="4" height="3" viewBox="0 0 4 3"><path d="M0 0H3.4L1.7 2Z" fill="#444"/></svg>
<svg style="left:603px;top:86px" width="11" height="10" viewBox="0 0 11 10">
 <path d="M0.8 7 L6.5 1.3 L10 4.8 L4.3 9.5 H2 Z" fill="#e58fa0"/>
 <path d="M3 5 L6.3 8.2" stroke="#f3f3f3" stroke-width="0.8"/>
</svg>
<svg style="left:617px;top:91.2px" width="4" height="3" viewBox="0 0 4 3"><path d="M0 0H3.4L1.7 2Z" fill="#444"/></svg>

<!-- formula bar icons -->
<svg style="left:70.5px;top:129.5px" width="6" height="4" viewBox="0 0 6 4"><path d="M0 0H5.4L2.7 3Z" fill="#555"/></svg>
<svg style="left:88.8px;top:128px" width="2" height="13" viewBox="0 0 2 13"><g fill="#aaa"><rect x="0.3" y="0.5" width="1.2" height="1.2"/><rect x="0.3" y="3.5" width="1.2" height="1.2"/><rect x="0.3" y="6.5" width="1.2" height="1.2"/><rect x="0.3" y="9.5" width="1.2" height="1.2"/></g></svg>
<svg style="left:110px;top:128.3px" width="9" height="9" viewBox="0 0 9 9"><path d="M0.8 0.8 L8.2 8.2 M8.2 0.8 L0.8 8.2" stroke="#ababab" stroke-width="1"/></svg>
<svg style="left:136.8px;top:128.5px" width="9" height="8" viewBox="0 0 9 8"><path d="M0.7 4.2 L3.2 7 L8.5 0.7" fill="none" stroke="#ababab" stroke-width="1"/></svg>
<svg style="left:162.5px;top:127.5px" width="10" height="11" viewBox="0 0 10 11">
 <path d="M5.8 0.8 C4.5 0.3 3.8 1.3 3.5 3 L2.3 8.8 C2 10.3 1.2 10.5 0.3 10.1" fill="none" stroke="#444" stroke-width="1.1"/>
 <path d="M1.8 4.3 H5" stroke="#444" stroke-width="0.9"/>
 <path d="M6 6 L9 9.5 M9 6 L6 9.5" stroke="#444" stroke-width="0.9"/>
</svg>
<svg style="left:717px;top:130.5px" width="6" height="4" viewBox="0 0 6 4"><path d="M0.5 0.5 L2.8 3 L5.2 0.5" fill="none" stroke="#555" stroke-width="1.1"/></svg>

<!-- select all triangle -->
<svg style="left:7.7px;top:152px" width="10" height="10" viewBox="0 0 10 10"><path d="M9.5 0.5 V9.5 H0.5 Z" fill="#b8b8b8"/></svg>

<!-- table borders -->
<div class="a" style="left:19.10px;top:163.00px;width:1px;height:161.10px;background:#555"></div>
<div class="a" style="left:77.20px;top:163.00px;width:1px;height:161.10px;background:#2a2a2a"></div>
<div class="a" style="left:138.00px;top:163.00px;width:1px;height:161.10px;background:#2a2a2a"></div>
<div class="a" style="left:19.1px;top:177.10px;width:119.90px;height:1px;background:#2a2a2a"></div>
<div class="a" style="left:19.1px;top:191.70px;width:119.90px;height:1px;background:#2a2a2a"></div>
<div class="a" style="left:19.1px;top:206.30px;width:119.90px;height:1px;background:#2a2a2a"></div>
<div class="a" style="left:19.1px;top:220.90px;width:119.90px;height:1px;background:#2a2a2a"></div>
<div class="a" style="left:19.1px;top:235.50px;width:119.90px;height:1px;background:#2a2a2a"></div>
<div class="a" style="left:19.1px;top:250.10px;width:119.90px;height:1px;background:#2a2a2a"></div>
<div class="a" style="left:19.1px;top:264.70px;width:119.90px;height:1px;background:#2a2a2a"></div>
<div class="a" style="left:19.1px;top:279.30px;width:119.90px;height:1px;background:#2a2a2a"></div>
<div class="a" style="left:19.1px;top:293.90px;width:119.90px;height:1px;background:#2a2a2a"></div>
<div class="a" style="left:19.1px;top:308.50px;width:119.90px;height:1px;background:#2a2a2a"></div>
<div class="a" style="left:19.1px;top:323.10px;width:119.90px;height:1px;background:#2a2a2a"></div>

<!-- selection -->
<div class="a" style="left:18.4px;top:177.4px;width:1.4px;height:14.8px;background:#217346"></div>
<div class="a" style="left:76.8px;top:176.8px;width:62.6px;height:16.2px;box-sizing:border-box;border:1.9px solid #217346"></div>
<div class="a" style="left:136.8px;top:190.4px;width:3.8px;height:3.8px;background:#217346;box-shadow:0 0 0 0.8px #fff"></div>

<!-- vscroll arrows -->
<svg style="left:717.5px;top:154.5px" width="7" height="5" viewBox="0 0 7 5"><path d="M0.5 4 H6.5 L3.5 0.8Z" fill="#555"/></svg>
<div class="a" style="left:715.6px;top:451px;width:10.4px;height:11px;background:#fff;box-shadow:0 0 0 0.5px #c8c8c8"></div>
<svg style="left:718px;top:455px" width="6" height="4" viewBox="0 0 6 4"><path d="M0.3 0.5 H5.7 L3 3.5Z" fill="#555"/></svg>
<!-- sheet tab nav -->
<svg style="left:20.3px;top:470.5px" width="4" height="4" viewBox="0 0 4 4"><path d="M3.5 0 V4 L0.3 2Z" fill="#b5b5b5"/></svg>
<svg style="left:41.5px;top:470.5px" width="4" height="4" viewBox="0 0 4 4"><path d="M0.5 0 V4 L3.7 2Z" fill="#b5b5b5"/></svg>
<div class="a" style="left:73.8px;top:465px;width:1px;height:14.6px;background:#9a9a9a"></div>
<div class="a" style="left:126.2px;top:462.9px;width:0.8px;height:17px;background:#c8c8c8"></div>
<div class="a" style="left:170.4px;top:462.9px;width:0.8px;height:17px;background:#c8c8c8"></div>
<div class="a" style="left:213.8px;top:466px;width:1px;height:12px;background:#aaa"></div>
<div class="a" style="left:257px;top:466px;width:1px;height:12px;background:#aaa"></div>
<svg style="left:281.5px;top:465.5px" width="12" height="12" viewBox="0 0 12 12"><circle cx="6" cy="6" r="5.2" fill="none" stroke="#666" stroke-width="1"/><path d="M6 3 V9 M3 6 H9" stroke="#666" stroke-width="1.1"/></svg>
<svg style="left:437px;top:468.5px" width="2" height="9" viewBox="0 0 2 9"><g fill="#aaa"><rect x="0.3" y="0" width="1.2" height="1.2"/><rect x="0.3" y="3" width="1.2" height="1.2"/><rect x="0.3" y="6" width="1.2" height="1.2"/></g></svg>
<div class="a" style="left:450.3px;top:466.5px;width:11.5px;height:11.5px;background:#fff;box-shadow:0 0 0 0.5px #c8c8c8"></div>
<svg style="left:454px;top:470px" width="4" height="5" viewBox="0 0 4 5"><path d="M3.5 0 V5 L0.3 2.5Z" fill="#555"/></svg>
<!-- status bar -->
<svg style="left:38.4px;top:486px" width="10" height="10" viewBox="0 0 10 10">
 <rect x="0.5" y="3" width="9" height="6.5" fill="#fff" stroke="#777" stroke-width="0.9"/>
 <path d="M0.5 6 H9.5 M4.5 3 V9.5" stroke="#999" stroke-width="0.7"/>
 <circle cx="2" cy="1.5" r="1.3" fill="#555"/><rect x="4.5" y="0.5" width="5" height="1.8" fill="#555"/>
</svg>
<svg style="left:513.5px;top:485px" width="10" height="10" viewBox="0 0 10 10"><rect x="0.5" y="0.5" width="9" height="9" fill="none" stroke="#666" stroke-width="0.9"/><path d="M3.5 0.5 V9.5 M6.5 0.5 V9.5 M0.5 3.5 H9.5 M0.5 6.5 H9.5" stroke="#666" stroke-width="0.8"/></svg>
<svg style="left:541.3px;top:485px" width="12" height="10" viewBox="0 0 12 10"><rect x="0.5" y="0.5" width="11" height="9" fill="none" stroke="#777" stroke-width="0.9"/><rect x="2.5" y="2" width="7" height="6" fill="none" stroke="#777" stroke-width="0.9"/></svg>
<svg style="left:569px;top:485px" width="12" height="10" viewBox="0 0 12 10"><path d="M0.5 0.5 H11.5 V9.5 H0.5 Z M6 0.5 V5 H0.5" fill="none" stroke="#666" stroke-width="0.9"/></svg>
<div class="a" style="left:593px;top:490.3px;width:4px;height:1.1px;background:#555"></div>
<div class="a" style="left:599px;top:490.5px;width:75px;height:0.8px;background:#999"></div>
<div class="a" style="left:634.7px;top:485.6px;width:3.5px;height:10px;background:#555"></div>
<svg style="left:676px;top:486.5px" width="6" height="7" viewBox="0 0 6 7"><path d="M3 0.5 V6.5 M0 3.5 H6" stroke="#444" stroke-width="1.1"/></svg>

<!-- arrow -->
<svg style="left:280px;top:104px" width="85" height="60" viewBox="280 104 85 60">
 <defs><filter id="bl" x="-10%" y="-10%" width="120%" height="120%"><feGaussianBlur stdDeviation="0.7"/></filter></defs>
 <path d="M286.8 133.6 L319.7 108.4 V121 H359 V146.2 H319.7 V158 Z" fill="#f77b68" filter="url(#bl)"/>
</svg>

<!-- watermark -->
<svg style="left:650px;top:420px" width="80" height="80" viewBox="650 420 80 80">
 <defs><filter id="bw" x="-50%" y="-50%" width="200%" height="200%"><feGaussianBlur stdDeviation="2"/></filter></defs>
 <circle cx="693" cy="465" r="27" fill="#fff" opacity="0.85" filter="url(#bw)"/>
 <path d="M697.4 475.2 C692 472 684 468 680.6 461.6 C678.5 457 678.5 448 683 444 C686 441 689 440 691.8 440 C696 439.8 699 440 701.4 440.8 C705 442 708 444 708.6 446.4 C710.5 450 710.5 453 710.2 455.2 C709.5 459 708.5 462 707.8 464.8 C707 468 706.5 470 706.2 471.2 C704 473 701 474.5 699.8 476 C698 477.5 697.5 479 698.2 479.2 C700 480.5 702 480.8 703 480.8 C706 480.5 709 480 710.2 480 C712 481 711.5 482.8 711 483.2 C709 484.5 706.5 485 704.6 485.6 C702.5 486.2 700.5 486.8 699.8 487.2" fill="none" stroke="#86a0c8" stroke-width="1.6" stroke-linecap="round"/>
</svg>

<div class="t" style="left:333.40px;top:12.36px;font-size:10.5px;font-weight:400;color:#fff;transform:scaleX(0.7873)">Solvetic  -  Excel</div>
<div class="t" style="left:525.00px;top:12.36px;font-size:10.5px;font-weight:400;color:#fff;transform:scaleX(0.8314)">Solvetic Internet</div>
<div class="t" style="left:6.80px;top:37.60px;font-size:9.8px;font-weight:400;color:#fff;transform:scaleX(0.9243)">Archivo</div>
<div class="t" style="left:54.80px;top:37.60px;font-size:9.8px;font-weight:400;color:#3f6b5a;transform:scaleX(0.9268)">Inicio</div>
<div class="t" style="left:97.00px;top:37.60px;font-size:9.8px;font-weight:400;color:#fff;transform:scaleX(0.8610)">Insertar</div>
<div class="t" style="left:147.00px;top:37.60px;font-size:9.8px;font-weight:400;color:#fff;transform:scaleX(0.8720)">Diseño de página</div>
<div class="t" style="left:234.00px;top:37.60px;font-size:9.8px;font-weight:400;color:#fff;transform:scaleX(0.8936)">Fórmulas</div>
<div class="t" style="left:290.80px;top:37.60px;font-size:9.8px;font-weight:400;color:#fff;transform:scaleX(0.8674)">Datos</div>
<div class="t" style="left:334.00px;top:37.60px;font-size:9.8px;font-weight:400;color:#fff;transform:scaleX(0.8309)">Revisar</div>
<div class="t" style="left:382.00px;top:37.60px;font-size:9.8px;font-weight:400;color:#fff;transform:scaleX(0.8792)">Vista</div>
<div class="t" style="left:422.00px;top:37.60px;font-size:9.8px;font-weight:400;color:#fff;transform:scaleX(0.8672)">Desarrollador</div>
<div class="t" style="left:494.00px;top:37.60px;font-size:9.8px;font-weight:400;color:#fff;transform:scaleX(0.8799)">Power Pivot</div>
<div class="t" style="left:573.30px;top:37.60px;font-size:9.8px;font-weight:400;color:#fff;transform:scaleX(0.9080)">Indicar</div>
<div class="t" style="left:672.00px;top:37.60px;font-size:9.8px;font-weight:400;color:#fff;transform:scaleX(0.9369)">Compartir</div>
<div class="t" style="left:9.80px;top:83.71px;font-size:9.5px;font-weight:400;color:#2a2a2a;transform:scaleX(0.8557)">Pegar</div>
<div class="t" style="left:71.70px;top:64.81px;font-size:9.2px;font-weight:400;color:#2a2a2a;transform:scaleX(0.9406)">Calibri</div>
<div class="t" style="left:153.30px;top:64.81px;font-size:9.2px;font-weight:400;color:#2a2a2a;transform:scaleX(0.8065)">11</div>
<div class="t" style="left:344.20px;top:59.21px;font-size:9.2px;font-weight:400;color:#2a2a2a;transform:scaleX(0.8811)">General</div>
<div class="t" style="left:421.00px;top:59.07px;font-size:9.6px;font-weight:400;color:#2a2a2a;transform:scaleX(0.9318)">Formato condicional</div>
<div class="t" style="left:421.00px;top:75.67px;font-size:9.6px;font-weight:400;color:#2a2a2a;transform:scaleX(0.9217)">Dar formato como tabla</div>
<div class="t" style="left:421.00px;top:92.67px;font-size:9.6px;font-weight:400;color:#2a2a2a;transform:scaleX(0.8750)">Estilos de celda</div>
<div class="t" style="left:546.90px;top:59.07px;font-size:9.6px;font-weight:400;color:#2a2a2a;transform:scaleX(0.8699)">Insertar</div>
<div class="t" style="left:546.90px;top:75.67px;font-size:9.6px;font-weight:400;color:#2a2a2a;transform:scaleX(0.8974)">Eliminar</div>
<div class="t" style="left:546.90px;top:92.67px;font-size:9.6px;font-weight:400;color:#2a2a2a;transform:scaleX(0.9095)">Formato</div>
<div class="t" style="left:3.50px;top:108.81px;font-size:9.2px;font-weight:400;color:#4d4d4d;transform:scaleX(0.8771)">Portapapeles</div>
<div class="t" style="left:123.30px;top:108.81px;font-size:9.2px;font-weight:400;color:#4d4d4d;transform:scaleX(0.8878)">Fuente</div>
<div class="t" style="left:252.00px;top:108.81px;font-size:9.2px;font-weight:400;color:#4d4d4d;transform:scaleX(0.9102)">Alineación</div>
<div class="t" style="left:349.00px;top:108.81px;font-size:9.2px;font-weight:400;color:#4d4d4d;transform:scaleX(0.8811)">Número</div>
<div class="t" style="left:452.50px;top:108.81px;font-size:9.2px;font-weight:400;color:#4d4d4d;transform:scaleX(0.8794)">Estilos</div>
<div class="t" style="left:549.60px;top:108.81px;font-size:9.2px;font-weight:400;color:#4d4d4d;transform:scaleX(0.8564)">Celdas</div>
<div class="t" style="left:614.00px;top:108.81px;font-size:9.2px;font-weight:400;color:#4d4d4d;transform:scaleX(0.8994)">Editar</div>
<div class="t" style="left:74.50px;top:86.30px;font-size:9.8px;font-weight:700;color:#333;transform:scaleX(0.8901)">N</div>
<div class="t" style="left:90.00px;top:86.30px;font-size:9.8px;font-weight:700;color:#333;font-style:italic;transform:scaleX(0.8759)">K</div>
<div class="t" style="left:106.00px;top:86.30px;font-size:9.8px;font-weight:700;color:#333;text-decoration:underline;text-underline-offset:1.5px;transform:scaleX(0.9623)">S</div>
<div class="t g" style="left:9.80px;top:133.34px;font-size:9.4px;font-weight:400;color:#222;transform:scaleX(0.9155)">B2</div>
<div class="t g" style="left:192.00px;top:133.80px;font-size:9.8px;font-weight:400;color:#1a1a1a;transform:scaleX(0.9387)">=Y(A2&gt;=10; A2&lt;30)</div>
<div class="t" style="left:6.00px;top:491.41px;font-size:9.2px;font-weight:400;color:#333;transform:scaleX(0.8753)">Listo</div>
<div class="t" style="left:694.80px;top:490.65px;font-size:8.5px;font-weight:400;color:#8a8a8a;transform:scaleX(0.8627)">100 %</div>
<div class="t" style="left:84.00px;top:471.60px;font-size:9.8px;font-weight:400;color:#444;transform:scaleX(0.9209)">Solvetic</div>
<div class="t" style="left:134.80px;top:471.60px;font-size:9.8px;font-weight:700;color:#1f5f45;transform:scaleX(0.9892)">Hoja1</div>
<div class="t" style="left:179.60px;top:471.60px;font-size:9.8px;font-weight:400;color:#444;transform:scaleX(0.9489)">Hoja2</div>
<div class="t" style="left:223.40px;top:471.60px;font-size:9.8px;font-weight:400;color:#444;transform:scaleX(0.9606)">Hoja4</div>
</body></html>
